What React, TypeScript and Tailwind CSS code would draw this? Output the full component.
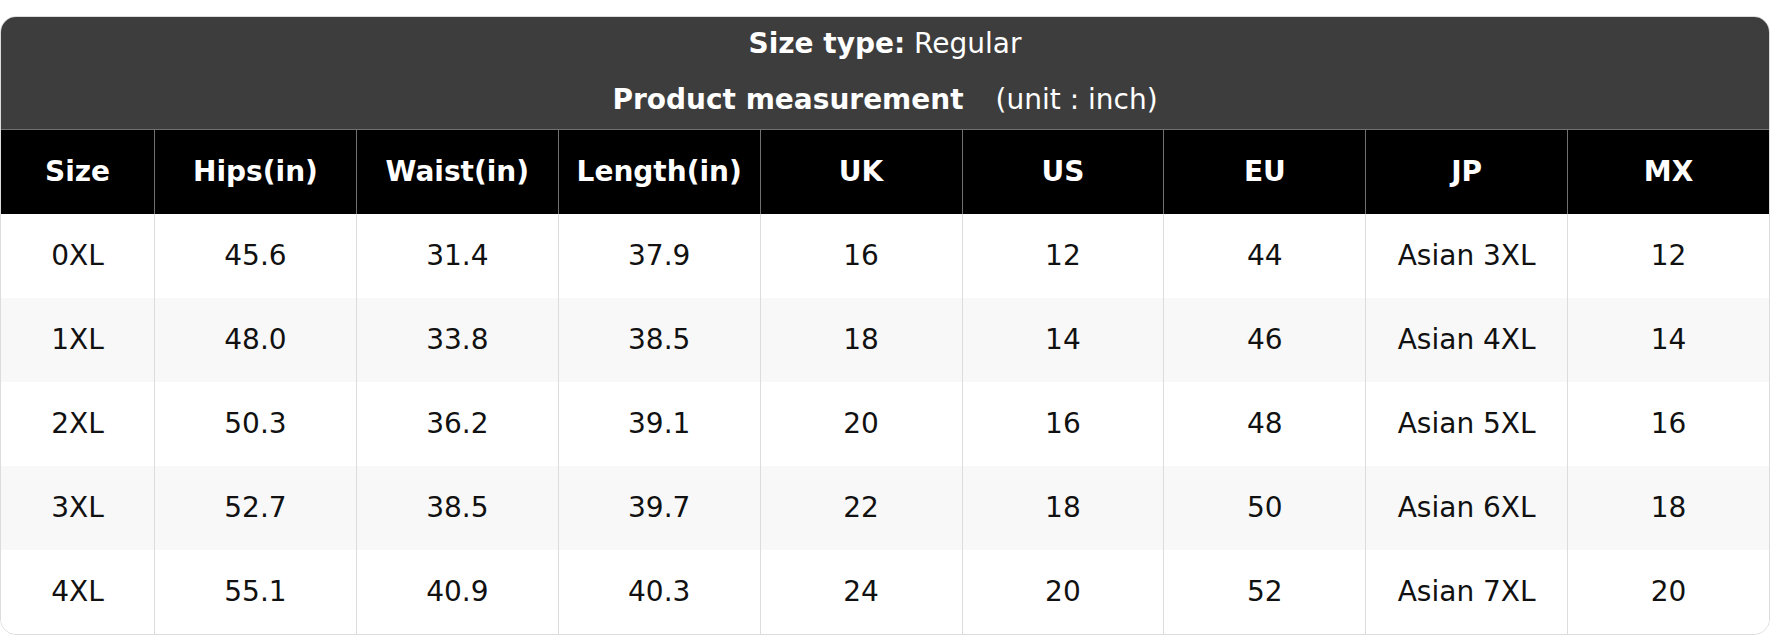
const columns = ["Size", "Hips(in)", "Waist(in)", "Length(in)", "UK", "US", "EU", "JP", "MX"];

const rows = [
  ["0XL", "45.6", "31.4", "37.9", "16", "12", "44", "Asian 3XL", "12"],
  ["1XL", "48.0", "33.8", "38.5", "18", "14", "46", "Asian 4XL", "14"],
  ["2XL", "50.3", "36.2", "39.1", "20", "16", "48", "Asian 5XL", "16"],
  ["3XL", "52.7", "38.5", "39.7", "22", "18", "50", "Asian 6XL", "18"],
  ["4XL", "55.1", "40.9", "40.3", "24", "20", "52", "Asian 7XL", "20"],
];

export default function App() {
  return (
    <div className="w-[1770px] h-[636px] bg-white pt-4 font-['DejaVu_Sans',sans-serif] text-[28px]">
      <div className="w-full rounded-2xl border border-[#dcdcdc] overflow-hidden">
        {/* Title block */}
        <div className="bg-[#3d3d3d] text-white text-center pt-[8px] pb-[10px]">
          <div className="h-[38px] leading-[38px]">
            <span className="font-bold">Size type:</span> Regular
          </div>
          <div className="h-[38px] leading-[38px] mt-[18px]">
            <span className="font-bold">Product measurement</span>
            <span className="ml-8">(unit : inch)</span>
          </div>
        </div>

        {/* Column headers */}
        <div className="grid grid-cols-[153px_repeat(8,1fr)] bg-black border-t border-[#707070]">
          {columns.map((col, i) => (
            <div
              key={col}
              className={`h-[84px] flex items-center justify-center text-white font-bold ${i > 0 ? "border-l border-[#707070]" : ""}`}
            >
              {col}
            </div>
          ))}
        </div>

        {/* Body rows */}
        {rows.map((row, r) => (
          <div
            key={row[0]}
            className={`grid grid-cols-[153px_repeat(8,1fr)] ${r % 2 === 1 ? "bg-[#f8f8f8]" : "bg-white"}`}
          >
            {row.map((cell, i) => (
              <div
                key={i}
                className={`h-[84px] flex items-center justify-center text-[#111] ${i > 0 ? "border-l border-[#dcdcdc]" : ""}`}
              >
                {cell}
              </div>
            ))}
          </div>
        ))}
      </div>
    </div>
  );
}
